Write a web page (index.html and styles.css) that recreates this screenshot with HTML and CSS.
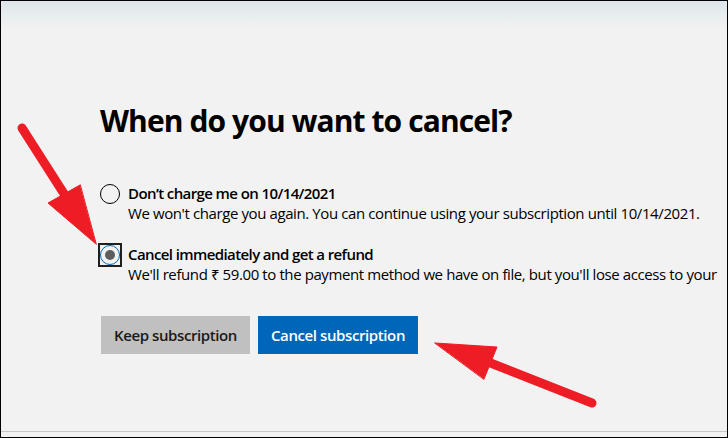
FILE: index.html
```html
<!DOCTYPE html>
<html lang="en">
<head>
<meta charset="utf-8">
<title>Cancel subscription</title>
<link rel="stylesheet" href="styles.css">
</head>
<body>
<div class="page">
  <main class="content">
    <h1 class="title">When do you want to cancel?</h1>
    <div class="options">
      <label class="option">
        <span class="radio-wrap"><span class="radio"></span></span>
        <span class="option-text">
          <span class="option-title">Don’t charge me on 10/14/2021</span>
          <span class="option-desc">We won't charge you again. You can continue using your subscription until 10/14/2021.</span>
        </span>
      </label>
      <label class="option">
        <span class="radio-wrap focused"><span class="radio checked"></span></span>
        <span class="option-text">
          <span class="option-title">Cancel immediately and get a refund</span>
          <span class="option-desc">We'll refund ₹ 59.00 to the payment method we have on file, but you'll lose access to your</span>
        </span>
      </label>
    </div>
    <div class="actions">
      <button class="btn btn-secondary">Keep subscription</button>
      <button class="btn btn-primary">Cancel subscription</button>
    </div>
  </main>
  <div class="footer"></div>
  <svg class="arrows" width="728" height="438" viewBox="0 0 728 438" aria-hidden="true">
    <g fill="#ee1c25" stroke="#ee1c25" stroke-linecap="round" stroke-linejoin="round">
      <line x1="22" y1="128" x2="68" y2="200" stroke-width="9"/>
      <polygon points="96,244 48,203 80,185" stroke-width="1"/>
      <line x1="592" y1="403" x2="488" y2="362" stroke-width="9"/>
      <polygon points="435,343 497,347 484,379" stroke-width="1"/>
    </g>
  </svg>
</div>
</body>
</html>
```

FILE: styles.css
```css
* { box-sizing: border-box; }
html, body { margin: 0; padding: 0; }
body {
  font-family: "Open Sans", "Noto Sans", sans-serif;
  color: #000;
  background: #f2f2f2;
}
.page {
  position: relative;
  width: 728px;
  height: 438px;
  border: 1px solid #000;
  background: linear-gradient(#dde6ec 0, #e6ecef 12px, #f2f2f2 28px);
  display: flex;
  flex-direction: column;
  overflow: hidden;
}
.content {
  flex: 1;
  padding: 100px 0 0 99px;
  white-space: nowrap;
}
.title {
  margin: 0;
  font-size: 30px;
  line-height: 40px;
  font-weight: 700;
  letter-spacing: -0.9px;
}
.options {
  margin-top: 42px;
  display: flex;
  flex-direction: column;
  gap: 21px;
}
.option {
  display: flex;
  align-items: flex-start;
  gap: 6px;
}
.radio-wrap {
  width: 24px;
  height: 24px;
  margin-top: -1px;
  margin-left: -2px;
  display: flex;
  align-items: center;
  justify-content: center;
  border: 2px solid transparent;
}
.radio-wrap.focused { border-color: #1f1f1f; }
.radio {
  width: 20px;
  height: 20px;
  border-radius: 50%;
  border: 1.5px solid #000;
  display: flex;
  align-items: center;
  justify-content: center;
}
.radio.checked { border: 1px solid #0067b8; }
.radio.checked::after {
  content: "";
  width: 10px;
  height: 10px;
  border-radius: 50%;
  background: #5d5d5d;
}
.option-text {
  display: flex;
  flex-direction: column;
  font-size: 15px;
  line-height: 20px;
  letter-spacing: -0.4px;
}
.option-title { font-weight: 600; letter-spacing: -0.6px; }
.option-desc { font-weight: 400; }
.actions {
  margin-top: 32px;
  display: flex;
  gap: 8px;
  padding-left: 1px;
}
.btn {
  height: 38px;
  border: 0;
  padding: 0 12px;
  font-family: inherit;
  font-size: 15px;
  font-weight: 600;
  letter-spacing: -0.4px;
}
.btn-secondary { background: #c0c0c0; color: #1a1a1a; width: 149px; }
.btn-primary { background: #0067b8; color: #fff; width: 160px; }
.footer {
  height: 6px;
  border-top: 1px solid #c6c6c6;
}
.arrows {
  position: absolute;
  left: -1px;
  top: -1px;
}
```
